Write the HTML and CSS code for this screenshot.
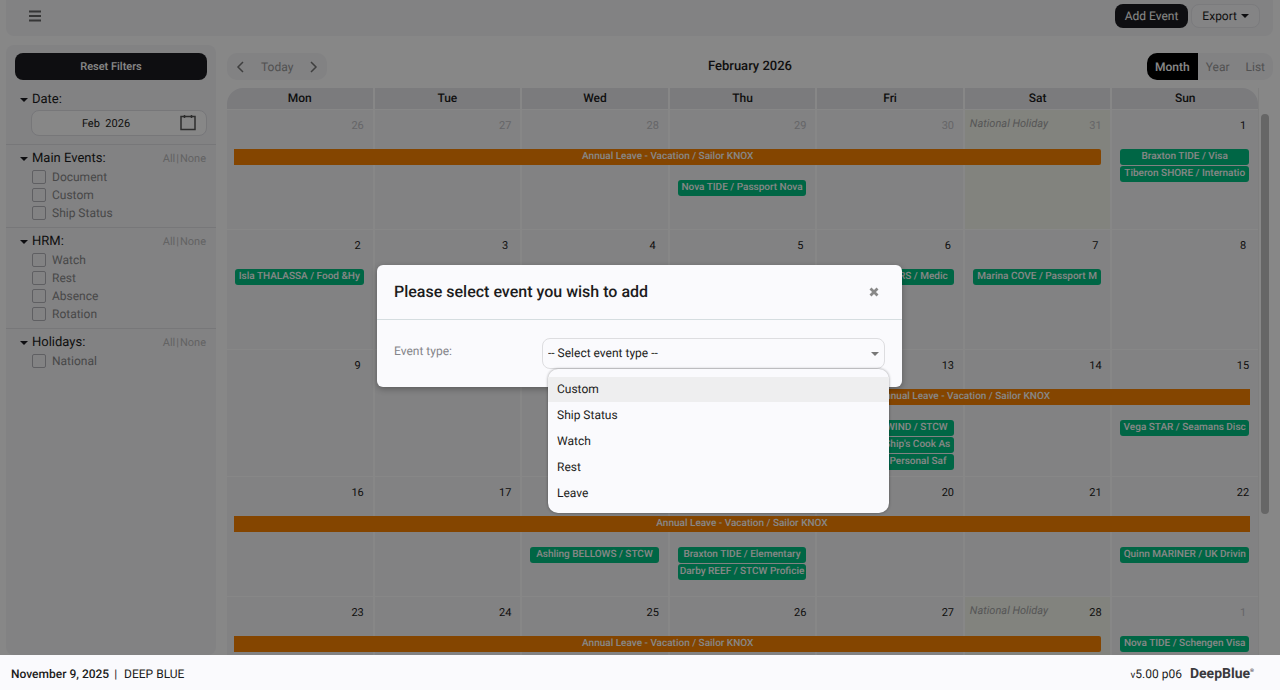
FILE: index.html
```html
<!DOCTYPE html>
<html lang="en">
<head>
    <meta charset="UTF-8">
    <meta name="viewport" content="width=device-width, initial-scale=1.0">
    <title>Calendar | DeepBlue</title>
    <link rel="stylesheet" href="styles.css">
</head>
<body>
    <div class="page">
        <header class="topbar">
            <button class="menu-btn" type="button" aria-label="Menu">
                <svg width="12" height="12" viewBox="0 0 12 12"><path d="M0 1.500h12M0 6h12M0 10.500h12" stroke="#666" stroke-width="2"/></svg>
            </button>
            <div class="topbar-actions">
                <button class="btn btn-dark" type="button">Add Event</button>
                <button class="btn btn-light" type="button">Export <span class="caret"></span></button>
            </div>
        </header>

        <div class="content">
            <aside class="sidebar">
                <button class="btn btn-dark reset-btn" type="button">Reset Filters</button>

                <section class="filter">
                    <div class="filter-head">
                        <span class="caret"></span>
                        <label class="filter-title" for="date">Date:</label>
                    </div>
                    <div class="date-box">
                        <input type="text" id="date" value="Feb  2026">
                        <svg class="date-icon" width="16" height="17" viewBox="0 0 16 17"><path d="M1 2.500h14v13H1z" fill="none" stroke="#555" stroke-width="1.500"/><path d="M4.500 1v3M11.500 1v3" stroke="#555" stroke-width="1.500"/></svg>
                    </div>
                </section>

                <section class="filter">
                    <div class="filter-head">
                        <span class="caret"></span>
                        <span class="filter-title">Main Events:</span>
                        <span class="filter-links"><a href="#">All</a><i>|</i><a href="#">None</a></span>
                    </div>
                    <label class="check"><input type="checkbox"> Document</label>
                    <label class="check"><input type="checkbox"> Custom</label>
                    <label class="check"><input type="checkbox"> Ship Status</label>
                </section>

                <section class="filter">
                    <div class="filter-head">
                        <span class="caret"></span>
                        <span class="filter-title">HRM:</span>
                        <span class="filter-links"><a href="#">All</a><i>|</i><a href="#">None</a></span>
                    </div>
                    <label class="check"><input type="checkbox"> Watch</label>
                    <label class="check"><input type="checkbox"> Rest</label>
                    <label class="check"><input type="checkbox"> Absence</label>
                    <label class="check"><input type="checkbox"> Rotation</label>
                </section>

                <section class="filter">
                    <div class="filter-head">
                        <span class="caret"></span>
                        <span class="filter-title">Holidays:</span>
                        <span class="filter-links"><a href="#">All</a><i>|</i><a href="#">None</a></span>
                    </div>
                    <label class="check"><input type="checkbox"> National</label>
                </section>
            </aside>

            <main class="main">
                <div class="toolbar">
                    <div class="group nav-group">
                        <button type="button" aria-label="Previous month">
                            <svg width="8" height="12" viewBox="0 0 8 12"><path d="M7 1L2 6l5 5" fill="none" stroke="#777" stroke-width="1.500"/></svg>
                        </button>
                        <button type="button">Today</button>
                        <button type="button" aria-label="Next month">
                            <svg width="8" height="12" viewBox="0 0 8 12"><path d="M1 1l5 5-5 5" fill="none" stroke="#777" stroke-width="1.500"/></svg>
                        </button>
                    </div>
                    <h1>February 2026</h1>
                    <div class="group view-group">
                        <button type="button" class="active">Month</button>
                        <button type="button">Year</button>
                        <button type="button">List</button>
                    </div>
                </div>

                <div class="calendar">
                    <div class="calendar-grid">
                        <div class="weekdays">
                            <div>Mon</div>
                            <div>Tue</div>
                            <div>Wed</div>
                            <div>Thu</div>
                            <div>Fri</div>
                            <div>Sat</div>
                            <div>Sun</div>
                        </div>

                        <div class="week">
                            <div class="day other"><span class="num">26</span></div>
                            <div class="day other"><span class="num">27</span></div>
                            <div class="day other"><span class="num">28</span></div>
                            <div class="day other"><span class="num">29</span></div>
                            <div class="day other"><span class="num">30</span></div>
                            <div class="day other holiday"><em>National Holiday</em><span class="num">31</span></div>
                            <div class="day"><span class="num">1</span></div>
                            <div class="leave to-sat">Annual Leave - Vacation / Sailor KNOX</div>
                            <div class="events thu below">
                                <div class="event">Nova TIDE / Passport Nova</div>
                            </div>
                            <div class="events sun">
                                <div class="event">Braxton TIDE / Visa</div>
                                <div class="event">Tiberon SHORE / Internatio</div>
                            </div>
                        </div>

                        <div class="week">
                            <div class="day"><span class="num">2</span></div>
                            <div class="day"><span class="num">3</span></div>
                            <div class="day"><span class="num">4</span></div>
                            <div class="day"><span class="num">5</span></div>
                            <div class="day"><span class="num">6</span></div>
                            <div class="day"><span class="num">7</span></div>
                            <div class="day"><span class="num">8</span></div>
                            <div class="events mon">
                                <div class="event">Isla THALASSA / Food &amp;Hy</div>
                            </div>
                            <div class="events fri">
                                <div class="event">Marlowe WATERS / Medic</div>
                            </div>
                            <div class="events sat">
                                <div class="event">Marina COVE / Passport M</div>
                            </div>
                        </div>

                        <div class="week">
                            <div class="day"><span class="num">9</span></div>
                            <div class="day"><span class="num">10</span></div>
                            <div class="day"><span class="num">11</span></div>
                            <div class="day"><span class="num">12</span></div>
                            <div class="day"><span class="num">13</span></div>
                            <div class="day"><span class="num">14</span></div>
                            <div class="day"><span class="num">15</span></div>
                            <div class="leave from-thu">Annual Leave - Vacation / Sailor KNOX</div>
                            <div class="events fri below">
                                <div class="event">Gale CROSSWIND / STCW</div>
                                <div class="event">Cora REEF / Ship's Cook As</div>
                                <div class="event">Orla DRIFT / Personal Saf</div>
                            </div>
                            <div class="events sun below">
                                <div class="event">Vega STAR / Seamans Disc</div>
                            </div>
                        </div>

                        <div class="week">
                            <div class="day"><span class="num">16</span></div>
                            <div class="day"><span class="num">17</span></div>
                            <div class="day"><span class="num">18</span></div>
                            <div class="day"><span class="num">19</span></div>
                            <div class="day"><span class="num">20</span></div>
                            <div class="day"><span class="num">21</span></div>
                            <div class="day"><span class="num">22</span></div>
                            <div class="leave">Annual Leave - Vacation / Sailor KNOX</div>
                            <div class="events wed below">
                                <div class="event">Ashling BELLOWS / STCW</div>
                            </div>
                            <div class="events thu below">
                                <div class="event">Braxton TIDE / Elementary</div>
                                <div class="event">Darby REEF / STCW Proficie</div>
                            </div>
                            <div class="events sun below">
                                <div class="event">Quinn MARINER / UK Drivin</div>
                            </div>
                        </div>

                        <div class="week">
                            <div class="day"><span class="num">23</span></div>
                            <div class="day"><span class="num">24</span></div>
                            <div class="day"><span class="num">25</span></div>
                            <div class="day"><span class="num">26</span></div>
                            <div class="day"><span class="num">27</span></div>
                            <div class="day holiday"><em>National Holiday</em><span class="num">28</span></div>
                            <div class="day other"><span class="num">1</span></div>
                            <div class="leave to-sat">Annual Leave - Vacation / Sailor KNOX</div>
                            <div class="events sun">
                                <div class="event">Nova TIDE / Schengen Visa</div>
                            </div>
                        </div>
                    </div>
                    <div class="scrollbar"><div class="thumb"></div></div>
                </div>
            </main>
        </div>

        <div class="overlay">
            <div class="modal" role="dialog" aria-labelledby="modalTitle">
                <div class="modal-header">
                    <h2 id="modalTitle">Please select event you wish to add</h2>
                    <button class="close-btn" type="button" aria-label="Close">
                        <svg width="10" height="10" viewBox="0 0 10 10"><path d="M1.500 1.500l7 7M8.500 1.500l-7 7" stroke="#888" stroke-width="2.800"/></svg>
                    </button>
                </div>
                <div class="modal-body">
                    <label for="eventType">Event type:</label>
                    <div class="select-box">
                        <select id="eventType">
                            <option>-- Select event type --</option>
                        </select>
                        <span class="caret"></span>
                        <ul class="options">
                            <li class="hover">Custom</li>
                            <li>Ship Status</li>
                            <li>Watch</li>
                            <li>Rest</li>
                            <li>Leave</li>
                        </ul>
                    </div>
                </div>
            </div>
        </div>
    </div>

    <footer>
        <div class="today"><strong>November 9, 2025</strong><span>|</span>DEEP BLUE</div>
        <div class="version"><span><small>v</small>5.00 p06</span> <b class="logo">DeepBlue<sup>®</sup></b></div>
    </footer>
</body>
</html>
```
FILE: styles.css
```css
* {
    box-sizing: border-box;
}
body {
    margin: 0;
    font-family: Roboto, "Liberation Sans", sans-serif;
    font-size: 12px;
    text-rendering: geometricPrecision;
    background-color: #fff;
    color: #1c1c20;
    height: 100vh;
    display: flex;
    flex-direction: column;
}
button, input, select {
    font-family: inherit;
    font-size: inherit;
    color: inherit;
    text-rendering: inherit;
}
button {
    border: none;
    background: none;
    padding: 0;
    cursor: pointer;
}
svg {
    display: block;
}
.page {
    flex: 1;
    min-height: 0;
    position: relative;
    display: flex;
    flex-direction: column;
    gap: 9px;
    padding: 0 7px 0 6px;
}

/* Top bar */
.topbar {
    height: 36px;
    flex: none;
    display: flex;
    justify-content: space-between;
    align-items: center;
    padding: 0 13px 4px 17px;
    background-color: #f5f5f8;
    border-radius: 0 0 8px 8px;
}
.menu-btn {
    padding: 6px;
}
.topbar-actions {
    display: flex;
    gap: 3px;
}
.btn {
    height: 24px;
    border-radius: 8px;
}
.btn-dark {
    background-color: #1c1c20;
    color: #fff;
    padding: 0 10px;
}
.btn-light {
    border: 1px solid #e8e8ec;
    padding: 0 10px;
    background-color: #f9f9fb;
    display: flex;
    align-items: center;
    gap: 4px;
}
.caret {
    display: inline-block;
    border: 4px solid transparent;
    border-top-color: currentColor;
    border-bottom: none;
}

/* Filters */
.content {
    flex: 1;
    min-height: 0;
    display: flex;
    gap: 11px;
}
.sidebar {
    width: 210px;
    flex: none;
    background-color: #f5f5f8;
    border-radius: 8px;
    padding-top: 8px;
}
.reset-btn {
    display: block;
    width: 192px;
    height: 27px;
    margin: 0 9px 6px;
    font-size: 11px;
    font-weight: 500;
}
.filter {
    padding: 4px 9px 5px 14px;
}
.filter + .filter {
    border-top: 1px solid #e0e0e5;
}
.filter-head {
    display: flex;
    align-items: center;
    gap: 4px;
    height: 19px;
}
.filter-title {
    font-size: 13px;
}
.filter-links {
    margin-left: auto;
    padding-right: 1px;
    font-size: 11px;
    color: #bbb;
}
.filter-links a {
    color: inherit;
    text-decoration: none;
}
.filter-links i {
    margin: 0 1px;
    font-style: normal;
}
.date-box {
    position: relative;
    margin: 1px 0 3px 11px;
}
.date-box input {
    display: block;
    width: 100%;
    height: 26px;
    border: 1px solid #e0e0e5;
    border-radius: 8px;
    background-color: #fff;
    font-size: 11px;
    text-align: center;
    padding: 0 30px 0 4px;
}
.date-icon {
    position: absolute;
    right: 11px;
    top: 4px;
}
.check {
    display: flex;
    align-items: center;
    gap: 6px;
    height: 18px;
    margin-left: 12px;
    color: #888;
}
.check input {
    appearance: none;
    width: 14px;
    height: 14px;
    margin: 0;
    border: 1px solid #b4b4ba;
    border-radius: 2px;
}

/* Calendar toolbar */
.main {
    flex: 1;
    min-width: 0;
    display: flex;
    flex-direction: column;
    padding-top: 8px;
}
.toolbar {
    display: grid;
    grid-template-columns: 1fr auto 1fr;
    align-items: center;
    margin-bottom: 8px;
}
.toolbar h1 {
    margin: 0;
    font-size: 13px;
    font-weight: 500;
}
.group {
    display: flex;
    height: 27px;
    border-radius: 10px;
    background-color: #f5f5f8;
    overflow: hidden;
    color: #999;
}
.nav-group {
    justify-self: start;
    align-items: center;
    gap: 17px;
    padding: 0 9px;
}
.view-group {
    justify-self: end;
}
.view-group button {
    padding: 0 8px;
}
.view-group .active {
    background-color: #000;
    color: #fff;
    font-weight: 500;
}

/* Month grid */
.calendar {
    flex: 1;
    min-height: 0;
    display: flex;
    overflow: hidden;
}
.calendar-grid {
    flex: 1;
}
.weekdays, .week {
    display: grid;
    grid-template-columns: repeat(7, minmax(0, 1fr));
    column-gap: 2px;
}
.weekdays {
    border-radius: 16px 16px 0 0;
    overflow: hidden;
    margin-bottom: 1px;
}
.weekdays div {
    background-color: #e8e8ed;
    text-align: center;
    font-weight: 500;
    line-height: 21px;
}
.week {
    grid-template-rows: 39px 31px auto;
    min-height: 120px;
    border-bottom: 1px solid #fff;
}
.day {
    grid-row: 1 / -1;
    background-color: #f5f5f8;
    display: flex;
    padding: 8px 5px 0 5px;
}
.day:nth-child(1) { grid-column: 1; }
.day:nth-child(2) { grid-column: 2; }
.day:nth-child(3) { grid-column: 3; }
.day:nth-child(4) { grid-column: 4; }
.day:nth-child(5) { grid-column: 5; }
.day:nth-child(6) { grid-column: 6; }
.day:nth-child(7) { grid-column: 7; }
.day.holiday {
    background-color: #f5f7ee;
}
.day em {
    font-size: 11px;
    line-height: 11px;
    color: #a4a4a4;
}
.num {
    margin-left: auto;
    width: 20px;
    height: 16px;
    line-height: 16px;
    text-align: center;
    font-size: 11px;
}
.other .num {
    color: #c0c0c4;
}
.leave {
    grid-row: 2;
    grid-column: 1 / -1;
    margin: 0 8px 0 7px;
}
.leave.to-sat {
    grid-column-end: 7;
    margin-right: 9px;
    border-radius: 0 2px 2px 0;
}
.leave.from-thu {
    grid-column-start: 4;
    margin-left: 9px;
    border-radius: 2px 0 0 2px;
}
.leave, .event {
    height: 16px;
    line-height: 16px;
    font-size: 10px;
    font-weight: 500;
    color: #fff;
    text-align: center;
    white-space: nowrap;
    overflow: hidden;
}
.leave {
    background-color: #fa8200;
}
.events {
    grid-row: 2 / 4;
    display: flex;
    flex-direction: column;
    gap: 1px;
    margin: 0 9px 0 8px;
    padding-bottom: 6px;
}
.events.below {
    grid-row: 3;
}
.mon { grid-column: 1; }
.wed { grid-column: 3; }
.thu { grid-column: 4; }
.fri { grid-column: 5; }
.sat { grid-column: 6; }
.sun { grid-column: 7; }
.event {
    background-color: #00c182;
    border-radius: 3px;
}
.scrollbar {
    width: 15px;
    border-left: 1px solid #f0f0f0;
    padding: 26px 4px 0 2px;
}
.thumb {
    height: 400px;
    border-radius: 4px;
    background-color: #c1c1c1;
}

/* Add event dialog */
.overlay {
    position: absolute;
    inset: 0;
    background-color: rgba(0, 0, 0, 0.47);
    display: flex;
    justify-content: center;
    align-items: center;
    padding: 0 1px 4px 0;
}
.modal {
    width: 525px;
    background-color: #fafafd;
    border-radius: 6px;
    box-shadow: 0 2px 6px rgba(0, 0, 0, 0.3);
}
.modal-header {
    display: flex;
    justify-content: space-between;
    align-items: center;
    height: 55px;
    padding: 0 23px 0 17px;
    border-bottom: 1px solid #d5dde0;
}
.modal-header h2 {
    margin: 0;
    font-size: 16px;
    font-weight: 500;
}
.modal-body {
    display: flex;
    justify-content: space-between;
    padding: 18px 17px;
    color: #85858a;
}
.modal-body label {
    line-height: 27px;
}
.select-box {
    position: relative;
    width: 343px;
    color: #1c1c20;
}
.select-box select {
    appearance: none;
    display: block;
    width: 100%;
    height: 31px;
    padding: 0 5px;
    border: 1px solid #dddde0;
    border-radius: 8px;
    background-color: #fafafd;
}
.select-box .caret {
    position: absolute;
    right: 6px;
    top: 14px;
    color: #777;
}
.options {
    position: absolute;
    top: 100%;
    left: 6px;
    right: -4px;
    display: grid;
    gap: 1px;
    margin: 0;
    padding: 8px 0 7px;
    list-style: none;
    background-color: #fafafd;
    border-radius: 10px;
    box-shadow: 0 0 3px rgba(0, 0, 0, 0.4);
}
.options li {
    padding: 0 9px;
    line-height: 25px;
}
.options .hover {
    background-color: #eeeeef;
}

footer {
    flex: none;
    height: 35px;
    display: flex;
    justify-content: space-between;
    align-items: center;
    padding: 2px 26px 0 11px;
    background-color: #fafafd;
}
footer strong {
    font-weight: 500;
}
.today span {
    margin: 0 7px 0 5px;
}
.version {
    display: flex;
    align-items: center;
    gap: 8px;
}
.version small {
    font-size: 10px;
}
.logo {
    font-size: 14px;
    color: #3a3a3e;
}
.logo sup {
    font-size: 5px;
    vertical-align: 6px;
}
```
